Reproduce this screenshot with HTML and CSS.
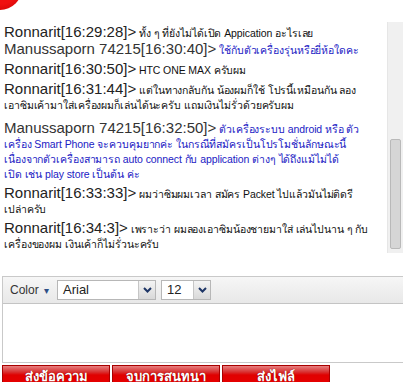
FILE: index.html
```html
<!DOCTYPE html>
<html lang="th">
<head>
    <meta charset="UTF-8">
    <meta name="viewport" content="width=device-width, initial-scale=1.0">
    <title>Chat</title>
    <link rel="stylesheet" href="styles.css">
</head>
<body>
    <div class="header">
        <div class="logo"></div>
    </div>

    <div class="chat-area">
        <div class="chat-log">
            <div class="msg first"><span class="name">Ronnarit[16:29:28]&gt;</span> ทั้ง ๆ ที่ยังไม่ได้เปิด Appication อะไรเลย</div>
            <div class="msg staff"><span class="name">Manussaporn 74215[16:30:40]&gt;</span> ใช้กับตัวเครื่องรุ่นหรือยี่ห้อใดคะ</div>
            <div class="msg"><span class="name">Ronnarit[16:30:50]&gt;</span> HTC ONE MAX ครับผม</div>
            <div class="msg long"><span class="name">Ronnarit[16:31:44]&gt;</span> แต่ในทางกลับกัน น้องผมก็ใช้ โปรนี้เหมือนกัน ลอง<br>เอาซิมเค้ามาใส่เครื่องผมก็เล่นได้นะครับ แถมเงินไม่รั่วด้วยครับผม</div>
            <div class="msg staff"><span class="name">Manussaporn 74215[16:32:50]&gt;</span> ตัวเครื่องระบบ android หรือ ตัว<br>เครื่อง Smart Phone จะควบคุมยากค่ะ ในกรณีที่สมัครเป็นโปรโมชั่นลักษณะนี้<br>เนื่องจากตัวเครื่องสามารถ auto connect กับ application ต่างๆ ได้ถึงแม้ไม่ได้<br>เปิด เช่น play store เป็นต้น ค่ะ</div>
            <div class="msg"><span class="name">Ronnarit[16:33:33]&gt;</span> ผมว่าซิมผมเวลา สมัคร Packet ไปแล้วมันไม่ติดรี<br>เปล่าครับ</div>
            <div class="msg"><span class="name">Ronnarit[16:34:3]&gt;</span> เพราะว่า ผมลองเอาซิมน้องชายมาใส่ เล่นไปนาน ๆ กับ<br>เครื่องของผม เงินเค้าก็ไม่รั่วนะครับ</div>
        </div>
        <div class="scroll-track">
            <div class="scroll-thumb"></div>
        </div>
    </div>

    <div class="editor">
        <div class="toolbar">
            <span class="color-picker">Color <span class="caret">&#9662;</span></span>
            <div class="combo font-combo">
                <span class="combo-text">Arial</span>
                <span class="combo-btn">
                    <svg width="9" height="6" viewBox="0 0 9 6"><polyline points="1,1 4.5,4.5 8,1" fill="none" stroke="#1d3566" stroke-width="2"/></svg>
                </span>
            </div>
            <div class="combo size-combo">
                <span class="combo-text">12</span>
                <span class="combo-btn">
                    <svg width="9" height="6" viewBox="0 0 9 6"><polyline points="1,1 4.5,4.5 8,1" fill="none" stroke="#1d3566" stroke-width="2"/></svg>
                </span>
            </div>
        </div>
        <div class="input-box"></div>
    </div>

    <div class="actions">
        <button class="red-btn">ส่งข้อความ</button>
        <button class="red-btn">จบการสนทนา</button>
        <button class="red-btn">ส่งไฟล์</button>
    </div>
</body>
</html>
```

FILE: styles.css
```css
body {
    margin: 0;
    background-color: #ffffff;
    font-family: "Liberation Sans", Arial, sans-serif;
    overflow: hidden;
}
.header {
    height: 22px;
    overflow: hidden;
}
.logo {
    width: 44px;
    height: 44px;
    margin: -34px 0 0 -22px;
    border-radius: 50%;
    background: radial-gradient(circle at 50% 40%, #f01010 60%, #c00000 100%);
}
.chat-area {
    display: flex;
    height: 231px;
}
.chat-log {
    flex: 1;
    padding: 3px 0 0 4px;
    font-size: 10.5px;
    line-height: 15px;
    letter-spacing: -0.1px;
    color: #111;
    white-space: nowrap;
    overflow: hidden;
}
.msg {
    margin-bottom: 4px;
}
.msg.first {
    margin-bottom: 1px;
}
.msg.long {
    margin-bottom: 8px;
}
.msg .name {
    font-size: 15px;
    line-height: 13px;
    letter-spacing: 0;
    color: #222;
}
.msg.staff {
    color: #2121c4;
}
.msg.staff .name {
    color: #333;
}
.scroll-track {
    width: 15px;
    background-color: #f0f0f0;
    border-left: 1px solid #e6e6e6;
}
.scroll-thumb {
    width: 9px;
    height: 108px;
    margin: 117px 0 0 2px;
    background-color: #d6d6d6;
    border: 1px solid #b9b9b9;
    border-radius: 2px;
}
.editor {
    margin: 23px 0 0 2px;
    border: 1px solid #c9c9c9;
    border-right: none;
}
.toolbar {
    display: flex;
    align-items: center;
    height: 26px;
    padding-left: 7px;
    background: linear-gradient(#f6f6f6, #e8e8e8);
    border-bottom: 1px solid #c4c4c4;
}
.color-picker {
    font-size: 12px;
    color: #333;
    width: 47px;
}
.caret {
    font-size: 10px;
    color: #2d4f86;
    margin-left: 2px;
}
.combo {
    display: flex;
    height: 18px;
    border: 1px solid #b7b7b7;
    background-color: #fff;
    margin-right: 5px;
}
.font-combo {
    width: 97px;
}
.size-combo {
    width: 48px;
}
.combo-text {
    flex: 1;
    font-size: 13px;
    line-height: 18px;
    padding-left: 5px;
    color: #222;
}
.combo-btn {
    width: 16px;
    display: flex;
    align-items: center;
    justify-content: center;
    border-left: 1px solid #c6c6c6;
    background: linear-gradient(#f4f4f4, #d9d9d9);
}
.input-box {
    height: 58px;
    background-color: #fff;
}
.actions {
    display: flex;
    gap: 2px;
    margin: 2px 0 0 2px;
}
.red-btn {
    width: 108px;
    height: 22px;
    padding: 0;
    border: 1px solid #a80000;
    background: linear-gradient(#e88080 0%, #d83030 30%, #e00000 45%, #e80000 100%);
    color: #fff;
    font-family: Tahoma, "DejaVu Sans", sans-serif;
    font-size: 13px;
    font-weight: bold;
    text-shadow: 0 0 1px #600;
    cursor: pointer;
}
```
